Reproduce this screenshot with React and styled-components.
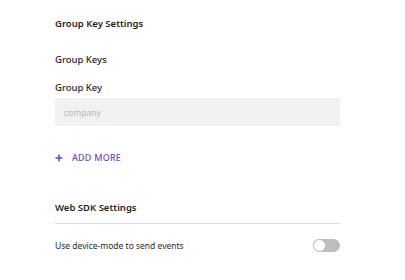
import styled, { createGlobalStyle } from 'styled-components';

const GlobalStyle = createGlobalStyle`
  body {
    margin: 0;
    background: #fff;
    font-family: 'Noto Sans', 'Open Sans', sans-serif;
    color: #1f1f1f;
  }
`;

const Page = styled.div`
  width: 285px;
  padding: 17px 0 0 55px;
  display: flex;
  flex-direction: column;
`;

const SectionTitle = styled.div`
  font-size: 9.5px;
  font-weight: 600;
  line-height: 14px;
  margin-top: ${props => props.top || 0}px;
  margin-bottom: ${props => props.gap || 0}px;
`;

const Label = styled.div`
  font-size: 9.5px;
  font-weight: 500;
  line-height: 14px;
  margin-bottom: ${props => props.gap || 0}px;
`;

const Input = styled.input`
  box-sizing: border-box;
  width: 285px;
  height: 28px;
  border: none;
  background: #f1f1f1;
  padding: 0 9px;
  font-family: inherit;
  font-size: 8.5px;
  color: #333;
  outline: none;
  &::placeholder {
    color: #b5b5b5;
  }
`;

const AddButton = styled.button`
  display: flex;
  align-items: center;
  gap: 9px;
  margin-top: 25px;
  padding: 0;
  border: none;
  background: none;
  color: #7b3fc0;
  font-family: inherit;
  font-size: 9px;
  font-weight: 500;
  letter-spacing: 0.2px;
  cursor: pointer;
`;

const Divider = styled.div`
  height: 1px;
  background: #dedede;
  margin-top: 8px;
`;

const Row = styled.div`
  display: flex;
  align-items: center;
  justify-content: space-between;
  margin-top: 15px;
`;

const RowText = styled.span`
  font-size: 8.5px;
  color: #2a2a2a;
`;

const Toggle = styled.div`
  position: relative;
  width: 27px;
  height: 13px;
  border-radius: 7px;
  background: #bdbdbd;
`;

const Knob = styled.div`
  position: absolute;
  left: 0;
  top: 0;
  width: 11px;
  height: 11px;
  border-radius: 50%;
  background: #fff;
  border: 1px solid #bdbdbd;
`;

const PlusIcon = () => (
  <svg width="8" height="8" viewBox="0 0 8 8">
    <path d="M4 0.5V7.5M0.5 4H7.5" stroke="#7b3fc0" strokeWidth="1.6" />
  </svg>
);

const App = () => {
  return (
    <>
      <GlobalStyle />
      <Page>
        <SectionTitle gap={22}>Group Key Settings</SectionTitle>
        <Label gap={14}>Group Keys</Label>
        <Label gap={3}>Group Key</Label>
        <Input placeholder="company" />
        <AddButton>
          <PlusIcon />
          ADD MORE
        </AddButton>
        <SectionTitle top={37}>Web SDK Settings</SectionTitle>
        <Divider />
        <Row>
          <RowText>Use device-mode to send events</RowText>
          <Toggle>
            <Knob />
          </Toggle>
        </Row>
      </Page>
    </>
  );
};

export default App;
